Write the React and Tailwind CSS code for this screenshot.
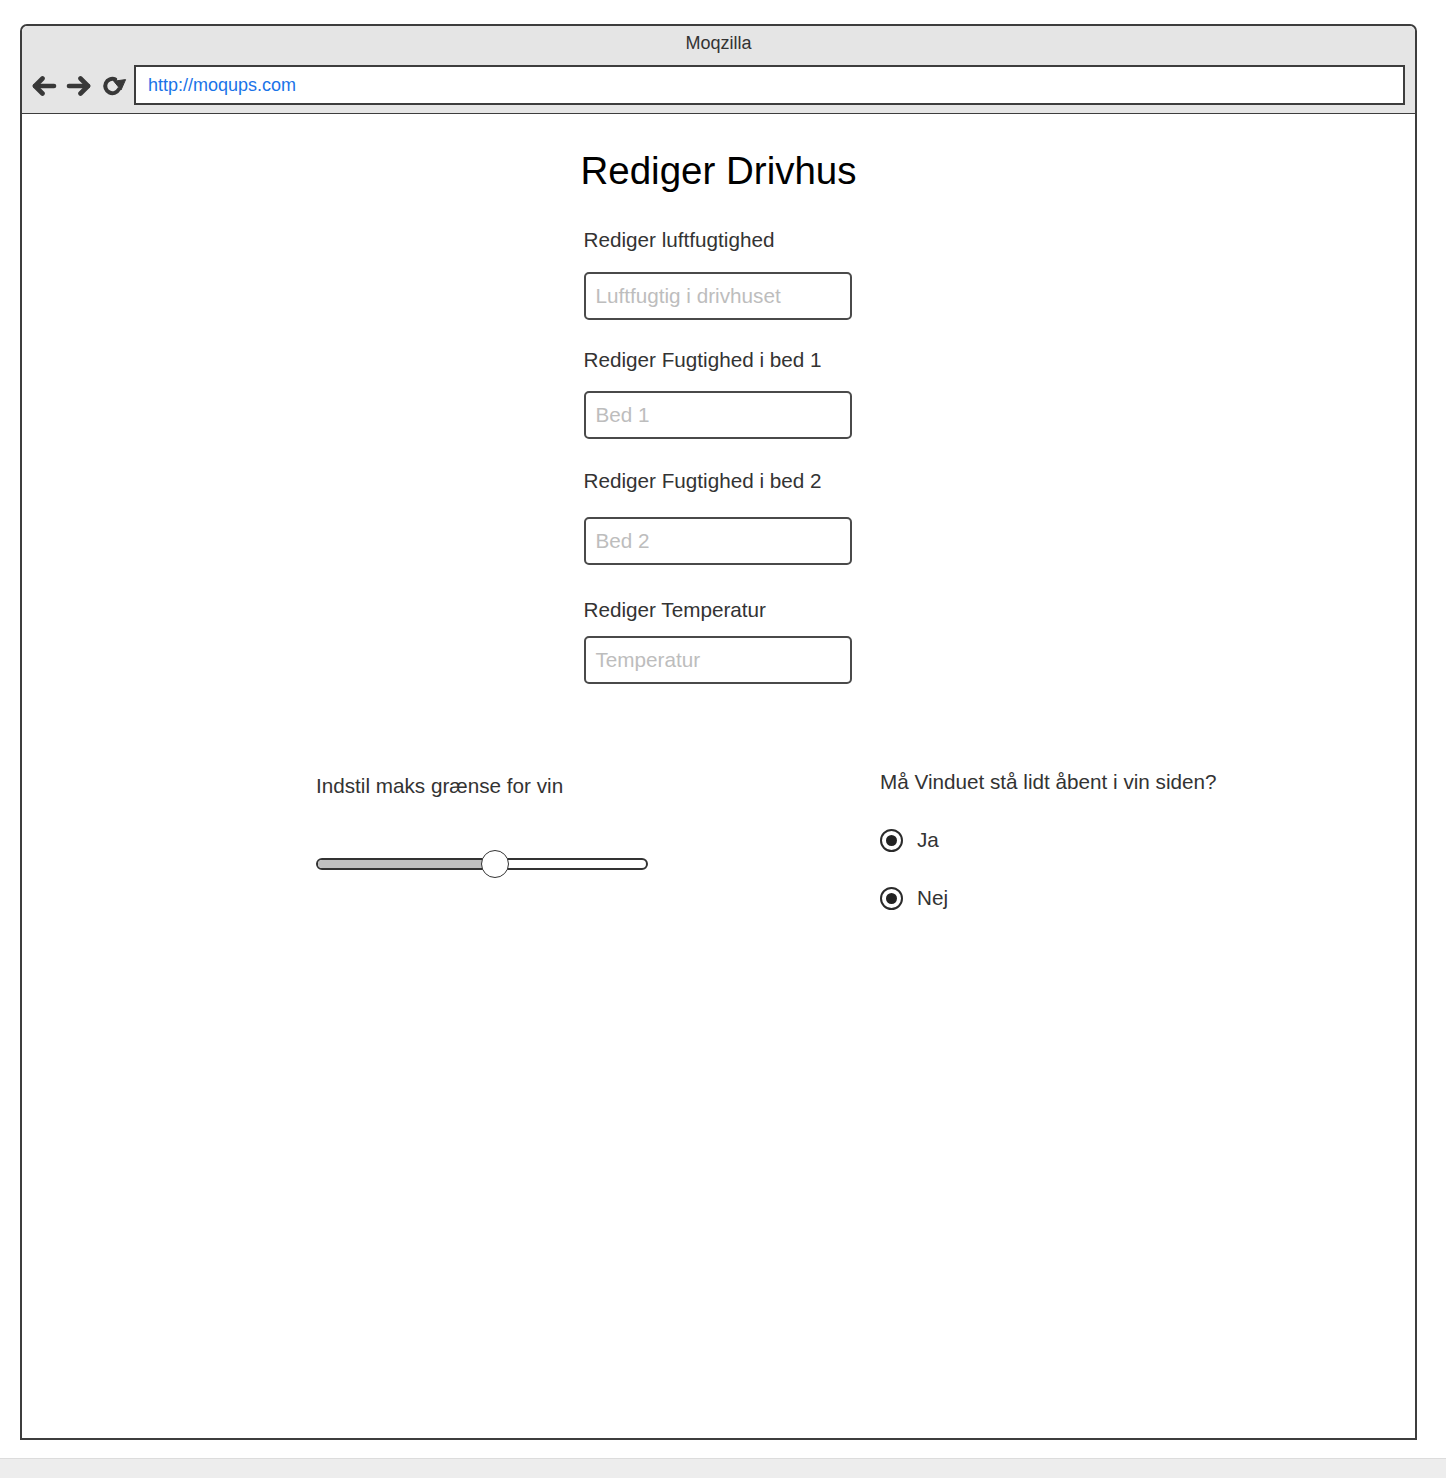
import React from "react";

const font = { fontFamily: '"Liberation Sans", Arial, sans-serif' };

function BackIcon() {
  return (
    <svg width="26" height="20" viewBox="0 0 26 20" fill="none" stroke="#383838" strokeWidth="4.6" strokeLinecap="round" strokeLinejoin="round">
      <path d="M23 10H4" />
      <path d="M11.5 2.5L4 10L11.5 17.5" />
    </svg>
  );
}

function ForwardIcon() {
  return (
    <svg width="26" height="20" viewBox="0 0 26 20" fill="none" stroke="#383838" strokeWidth="4.6" strokeLinecap="round" strokeLinejoin="round">
      <path d="M3 10H22" />
      <path d="M14.5 2.5L22 10L14.5 17.5" />
    </svg>
  );
}

function ReloadIcon() {
  return (
    <svg width="26" height="20" viewBox="0 0 26 20">
      <path
        d="M17.8 13.4A7.2 7.2 0 1 1 14.2 3.3"
        fill="none"
        stroke="#383838"
        strokeWidth="4"
        strokeLinecap="round"
      />
      <path d="M12.8 5.2L24.6 3.6L20 14Z" fill="#383838" stroke="#383838" strokeWidth="1" strokeLinejoin="round" />
    </svg>
  );
}

function Field({ label, placeholder, labelTop, inputTop }) {
  return (
    <>
      <div className={`${labelTop} text-[20.7px] leading-[24px] text-[#333]`}>{label}</div>
      <div
        className={`${inputTop} flex h-[48px] items-center rounded-[5px] border-2 border-[#4a4a4a] px-[10px] text-[20.7px] text-[#bdbdbd]`}
      >
        {placeholder}
      </div>
    </>
  );
}

function Radio({ label, className }) {
  return (
    <div className={`flex h-[24px] items-center gap-[14px] ${className}`}>
      <span className="flex h-[23px] w-[23px] items-center justify-center rounded-full border-2 border-[#2b2b2b]">
        <span className="h-[11px] w-[11px] rounded-full bg-[#222]" />
      </span>
      <span className="text-[20.7px] leading-[24px] text-[#333]">{label}</span>
    </div>
  );
}

export default function App() {
  return (
    <div className="flex min-h-[1478px] flex-col bg-white" style={font}>
      <div className="ml-[20px] mt-[24px] flex h-[1416px] w-[1397px] flex-col rounded-t-[7px] border-2 border-[#3d3d3d]">
        {/* browser chrome */}
        <div className="flex h-[88px] flex-col rounded-t-[6px] border-b border-[#3d3d3d] bg-[#e5e5e5]">
          <div className="pt-[6px] text-center text-[18px] leading-[22px] text-[#333]">Moqzilla</div>
          <div className="mt-[11px] flex items-center pl-[9px] pr-[10px]">
            <div className="flex items-center gap-[9px] pt-[1px]">
              <BackIcon />
              <ForwardIcon />
              <ReloadIcon />
            </div>
            <div className="ml-[7px] flex h-[40px] flex-1 items-center border-2 border-[#3d3d3d] bg-white px-[12px] text-[18px] text-[#1a73e8]">
              http://moqups.com
            </div>
          </div>
        </div>

        {/* page */}
        <div className="flex flex-1 flex-col">
          <h1 className="mt-[35px] text-center text-[38.5px] leading-[44px] text-black">Rediger Drivhus</h1>

          <div className="mx-auto flex w-[268px] -translate-x-[1px] flex-col">
            <Field label="Rediger luftfugtighed" placeholder="Luftfugtig i drivhuset" labelTop="mt-[35px]" inputTop="mt-[20px]" />
            <Field label="Rediger Fugtighed i bed 1" placeholder="Bed 1" labelTop="mt-[28px]" inputTop="mt-[19px]" />
            <Field label="Rediger Fugtighed i bed 2" placeholder="Bed 2" labelTop="mt-[30px]" inputTop="mt-[24px]" />
            <Field label="Rediger Temperatur" placeholder="Temperatur" labelTop="mt-[33px]" inputTop="mt-[14px]" />
          </div>

          <div className="mt-[86px] flex pl-[294px]">
            <div className="flex w-[564px] flex-col">
              <div className="mt-[4px] text-[20.7px] leading-[24px] text-[#333]">Indstil maks grænse for vin</div>
              <div className="relative mt-[52px] flex h-[28px] w-[332px] items-center">
                <div className="flex h-[12px] w-full overflow-hidden rounded-full border-2 border-[#333] bg-white">
                  <div className="h-full w-[178px] bg-[#c0c0c0]" />
                </div>
                <div className="absolute left-[165px] top-0 h-[28px] w-[28px] rounded-full border-[1.5px] border-[#333] bg-white" />
              </div>
            </div>
            <div className="flex flex-col">
              <div className="text-[20.7px] leading-[24px] text-[#333]">Må Vinduet stå lidt åbent i vin siden?</div>
              <Radio label="Ja" className="mt-[34px]" />
              <Radio label="Nej" className="mt-[34px]" />
            </div>
          </div>
        </div>
      </div>
      <div className="flex-1" />
      <div className="h-[20px] border-t border-[#dcdcdc] bg-[#ededed]" />
    </div>
  );
}
